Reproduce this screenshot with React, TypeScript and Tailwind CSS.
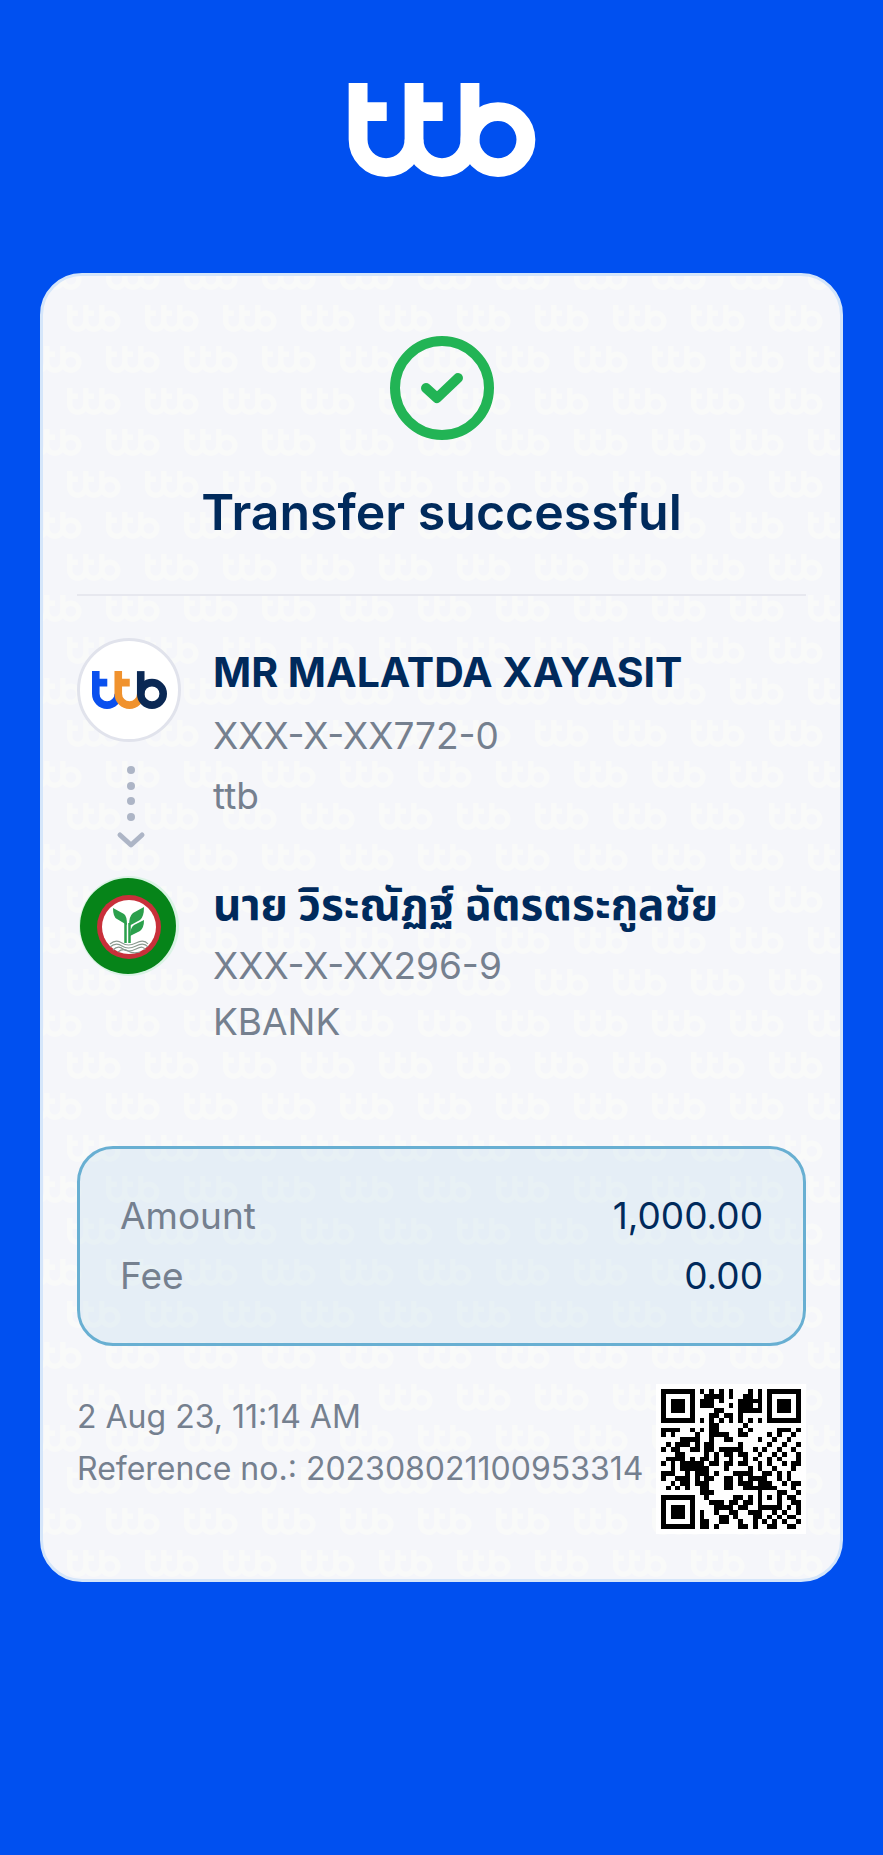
const QR_ROWS = [
  "#######.#.#.#.#...#.#.#######",
  "#.....#..####.#..##.#.#.....#",
  "#.###.#.###.#...#####.#.###.#",
  "#.###.#.###...#.###.#.#.###.#",
  "#.###.#....##...#####.#.###.#",
  "#.....#...##.##.#.....#.....#",
  "#######.#.#.#.#.#.#.#.#######",
  "..........##.....#...........",
  "####..#.#.##....#.#.....###.#",
  "#.#....#..####..##....#.#..#.",
  "....####..#..##.....#..#..#..",
  ".#.###.#.##.....#.....#..#..#",
  "#.##..##.##.#####..#.#..#..#.",
  "...##....#.#.##.##..#..#.#..#",
  ".####.#.##.#..#..#.#..#.#...#",
  "#.#.#####.##.##.##..#.#..#.##",
  "..#.######...#....#.#..#...#.",
  "###..#.###.#...####..##.#.#..",
  "#..###.#.##..##.#.####..#.#..",
  "..#.##.###...##.###.###..#.##",
  ".#.#.#..##...##..#######...#.",
  "........###.........#...##..#",
  "#######..#.....##.#.#.#.#.##.",
  "#.....#...###.##.##.#...#..##",
  "#.###.#....####.##..#####.#.#",
  "#.###.#.#..#..##..###..#.#..#",
  "#.###.#.#...##.#...##.#.#.##.",
  "#.....#.##..##..#..#.#.#.#..#",
  "#######.##.#....##.#..##..##.",
];

type LogoColors = [string, string, string];

type TtbLogoProps = {
  className?: string;
  colors?: LogoColors;
};

const WHITE: LogoColors = ["#ffffff", "#ffffff", "#ffffff"];
const CREAM: LogoColors = ["#fffff8", "#fffff8", "#fffff8"];

// Top-left corner of every mark that touches one watermark tile
const WATERMARK_SPOTS = [
  [24, 29],
  [-15, 70],
  [63, 70],
  [-15, -13],
  [63, -13],
];

function TtbMark({ colors = WHITE }: { colors?: LogoColors }) {
  return (
    <g fill="none" strokeWidth="57">
      <path d="M28.5 0V171A84.5 84.5 0 0 0 197.5 171M28.5 86.5H115" stroke={colors[0]} />
      <path d="M197.5 0V171A84.5 84.5 0 0 0 366.5 171M197.5 86.5H284" stroke={colors[1]} />
      <path d="M366.5 0V171" stroke={colors[2]} />
      <circle cx="451" cy="171" r="84.5" stroke={colors[2]} />
    </g>
  );
}

function TtbLogo({ className, colors }: TtbLogoProps) {
  return (
    <svg viewBox="0 0 564 284" className={className} role="img" aria-label="ttb">
      <TtbMark colors={colors} />
    </svg>
  );
}

function Watermark() {
  return (
    <svg className="pointer-events-none absolute inset-0 h-full w-full" aria-hidden="true">
      <defs>
        <pattern id="ttb-watermark" width="78" height="83" patternUnits="userSpaceOnUse">
          <g opacity="0.4">
            {WATERMARK_SPOTS.map(([x, y]) => (
              <g key={`${x}-${y}`} transform={`translate(${x} ${y}) scale(0.095)`}>
                <TtbMark colors={CREAM} />
              </g>
            ))}
          </g>
        </pattern>
      </defs>
      <rect width="100%" height="100%" fill="url(#ttb-watermark)" />
    </svg>
  );
}

function SuccessIcon() {
  return (
    <svg viewBox="0 0 104 104" className="size-26" fill="none" stroke="#22b455" aria-hidden="true">
      <circle cx="52" cy="52" r="47" strokeWidth="10" />
      <path d="M36 52L47 62L68 42" strokeWidth="10" strokeLinecap="round" strokeLinejoin="round" />
    </svg>
  );
}

function KbankLogo() {
  return (
    <svg viewBox="0 0 104 104" className="size-26 shrink-0" role="img" aria-label="KBANK">
      <circle cx="52" cy="52" r="50" fill="#daf3e5" />
      <circle cx="51" cy="52" r="48" fill="#068419" />
      <circle cx="52" cy="53" r="32" fill="#c8303a" />
      <circle cx="52" cy="53" r="27" fill="#ffffff" />
      <g fill="#2ba04c">
        <path d="M36 34L47 40Q50 42 50 51L40 45Q36 43 36 34Z" />
        <path d="M67 33L56 39Q52 42 52 52L63 46Q67 43 67 33Z" />
        <path d="M67 46L57 51Q53 54 53 62L63 57Q67 54 67 46Z" />
      </g>
      <path d="M48.5 49V69M52.5 49V69" fill="none" stroke="#2ba04c" strokeWidth="2.5" />
      <g fill="none" stroke="#8b9a90" strokeWidth="1.2">
        <path d="M33 70Q39 65 45 69T59 69T71 70" />
        <path d="M33 73Q39 68 45 72T59 72T71 73" />
        <path d="M36 76Q41 71 46 75T59 75T68 76" />
        <path d="M41 78Q46 74 51 77T63 78" />
      </g>
    </svg>
  );
}

function TransferArrow() {
  return (
    <svg viewBox="0 0 32 88" className="ml-1 h-22 w-8" aria-hidden="true">
      <g fill="#adb5c6">
        <circle cx="16" cy="8" r="4" />
        <circle cx="16" cy="24" r="4" />
        <circle cx="16" cy="39" r="4" />
        <circle cx="16" cy="55" r="4" />
      </g>
      <path d="M5 73L16 83L27 73" fill="none" stroke="#adb5c6" strokeWidth="5" strokeLinecap="round" strokeLinejoin="round" />
    </svg>
  );
}

function QrCode() {
  return (
    <svg viewBox="-1 -1 31 31" className="size-[150px] shrink-0" shapeRendering="crispEdges" role="img" aria-label="QR code">
      <rect x="-1" y="-1" width="31" height="31" fill="#ffffff" />
      {QR_ROWS.map((row, y) =>
        row.split("").map((cell, x) => (cell === "#" ? <rect key={`${x}-${y}`} x={x} y={y} width="1" height="1" /> : null))
      )}
    </svg>
  );
}

export default function App() {
  return (
    <div className="min-h-screen bg-[#0050f0] px-10 pt-[83px] pb-16 font-['Inter','Noto_Sans_Thai',sans-serif] text-[#002a5c]">
      <header className="flex justify-center">
        <TtbLogo className="h-[94px] w-[188px]" />
      </header>

      <main className="relative mt-24 overflow-hidden rounded-[42px] border-3 border-[#d5e6fa] bg-[#f5f6fa] px-[34px] pt-[60px] pb-[45px]">
        <Watermark />

        <div className="relative">
          {/* Status */}
          <div className="flex flex-col items-center border-b-2 border-[#e7e8ef] pb-[52px]">
            <SuccessIcon />
            <h1 className="mt-[42px] text-center text-[50px] leading-[60px] font-semibold">Transfer successful</h1>
          </div>

          {/* Sender */}
          <section className="mt-[42px] flex gap-8">
            <div className="flex w-26 shrink-0 flex-col items-center">
              <div className="flex size-26 items-center justify-center rounded-full border-3 border-[#e1e3ec] bg-white">
                <TtbLogo className="h-[38px] w-[75px]" colors={["#0a50ee", "#f0922e", "#0a2854"]} />
              </div>
              <div className="mt-5">
                <TransferArrow />
              </div>
            </div>
            <div className="pt-2">
              <h2 className="text-[41px] leading-[52px] font-bold">MR MALATDA XAYASIT</h2>
              <p className="mt-2 text-[37px] leading-[60px] text-[#75808f]">XXX-X-XX772-0</p>
              <p className="text-[37px] leading-[60px] text-[#75808f]">ttb</p>
            </div>
          </section>

          {/* Recipient */}
          <section className="mt-6 flex gap-8">
            <KbankLogo />
            <div className="pt-1">
              <h2 className="text-[44px] leading-[52px] font-bold">นาย วิระณัฏฐ์ ฉัตรตระกูลชัย</h2>
              <p className="mt-2 text-[37px] leading-[56px] text-[#75808f]">XXX-X-XX296-9</p>
              <p className="text-[37px] leading-[56px] text-[#75808f]">KBANK</p>
            </div>
          </section>

          {/* Totals */}
          <dl className="mt-24 flex flex-col rounded-[36px] border-3 border-[#68afd2] bg-[#58a5d8]/10 px-10 py-[37px] text-[37px] leading-[60px]">
            <div className="flex justify-between">
              <dt className="text-[#75808f]">Amount</dt>
              <dd>1,000.00</dd>
            </div>
            <div className="flex justify-between">
              <dt className="text-[#75808f]">Fee</dt>
              <dd>0.00</dd>
            </div>
          </dl>

          <footer className="mt-[38px] flex items-start justify-between">
            <div className="pt-[7px] text-[32px] leading-[52px] whitespace-nowrap text-[#75808f]">
              <p>2 Aug 23, 11:14 AM</p>
              <p>Reference no.: 202308021100953314</p>
            </div>
            <QrCode />
          </footer>
        </div>
      </main>
    </div>
  );
}
